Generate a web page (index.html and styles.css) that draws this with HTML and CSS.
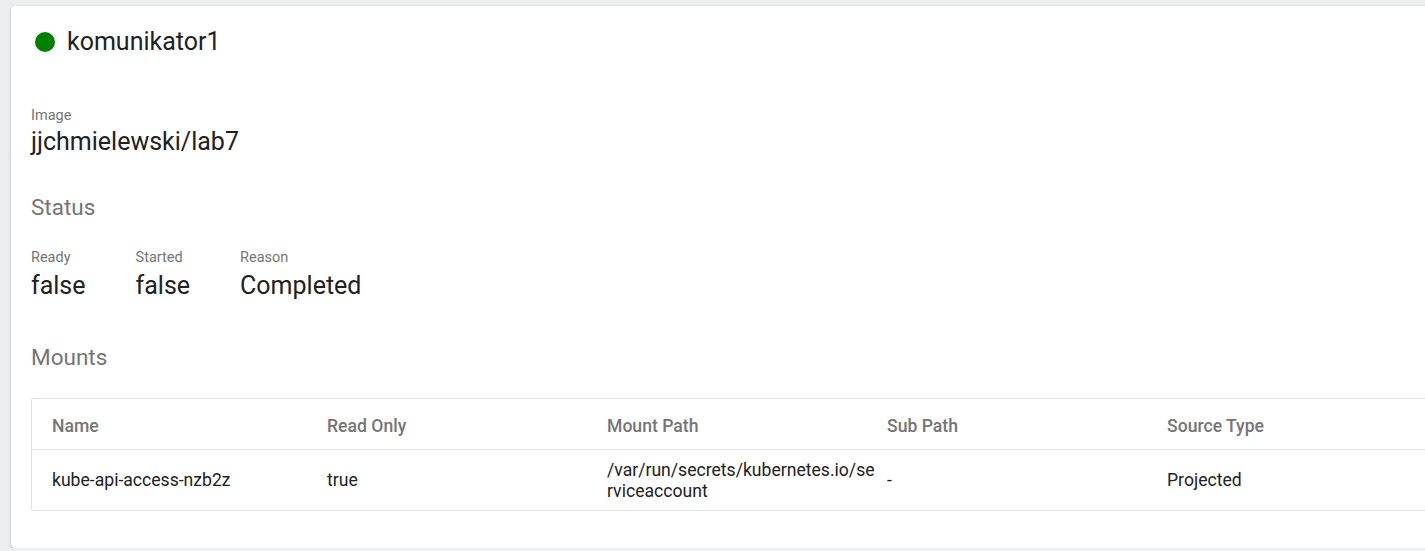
FILE: index.html
```html
<!DOCTYPE html>
<html>
<head>
<meta charset="utf-8">
<link rel="stylesheet" href="styles.css">
</head>
<body>
<div class="card">
  <div class="header">
    <span class="dot"></span>
    <h1 class="title">komunikator1</h1>
  </div>
  <div class="content">
    <div class="prop image-prop">
      <div class="label">Image</div>
      <div class="value">jjchmielewski/lab7</div>
    </div>

    <h2 class="section status-title">Status</h2>
    <div class="props">
      <div class="prop">
        <div class="label">Ready</div>
        <div class="value">false</div>
      </div>
      <div class="prop">
        <div class="label">Started</div>
        <div class="value">false</div>
      </div>
      <div class="prop">
        <div class="label">Reason</div>
        <div class="value">Completed</div>
      </div>
    </div>

    <h2 class="section mounts-title">Mounts</h2>
    <div class="table">
      <div class="row head">
        <div class="cell">Name</div>
        <div class="cell">Read Only</div>
        <div class="cell">Mount Path</div>
        <div class="cell">Sub Path</div>
        <div class="cell">Source Type</div>
      </div>
      <div class="row data">
        <div class="cell">kube-api-access-nzb2z</div>
        <div class="cell">true</div>
        <div class="cell path">/var/run/secrets/kubernetes.io/serviceaccount</div>
        <div class="cell">-</div>
        <div class="cell">Projected</div>
      </div>
    </div>
  </div>
</div>
</body>
</html>
```

FILE: styles.css
```css
html, body {
  margin: 0;
  padding: 0;
  overflow: hidden;
  background: #edeef0;
  font-family: Roboto, "Liberation Sans", Arial, sans-serif;
  color: #212121;
}

.card {
  margin: 6px 0 0 11px;
  width: 1460px;
  background: #ffffff;
  border-radius: 4px;
  box-shadow: 0 1px 3px rgba(0, 0, 0, 0.25), 0 1px 1px rgba(0, 0, 0, 0.12);
}

.header {
  display: flex;
  align-items: center;
  gap: 12px;
  padding: 20px 24px 0 24px;
}

.dot {
  width: 20px;
  height: 20px;
  border-radius: 50%;
  background: #008000;
  flex: none;
}

.title {
  margin: 0;
  font-size: 25px;
  line-height: 32px;
  font-weight: 400;
  color: #212121;
}

.content {
  padding: 49px 0 37px 20px;
}

.label {
  font-size: 14.5px;
  line-height: 18px;
  color: #757575;
}

.value {
  font-size: 25px;
  line-height: 30px;
  color: #212121;
}

.image-prop .value {
  margin-top: 2px;
}

.props {
  display: flex;
  gap: 50px;
  margin-top: 28px;
}

.props .value {
  margin-top: 4px;
}

.section {
  margin: 0;
  font-size: 22.5px;
  line-height: 28px;
  font-weight: 400;
  color: #757575;
}

.status-title {
  margin-top: 36px;
}

.mounts-title {
  margin-top: 42px;
}

.table {
  margin-top: 27px;
  border: 1px solid #e0e0e0;
  border-radius: 2px;
}

.row {
  display: grid;
  grid-template-columns: 295px 280px 280px 280px 1fr;
  align-items: center;
  font-size: 17.6px;
  box-sizing: border-box;
}

.row.head {
  height: 51px;
  padding-top: 3px;
  border-bottom: 1px solid #e0e0e0;
  font-weight: 500;
  color: #757575;
}

.row.data {
  height: 60px;
  padding-top: 1px;
  line-height: 21px;
  color: #212121;
}

.cell {
  padding-right: 10px;
}

.cell:first-child {
  padding-left: 20px;
}

.cell.path {
  word-break: break-all;
}
```
